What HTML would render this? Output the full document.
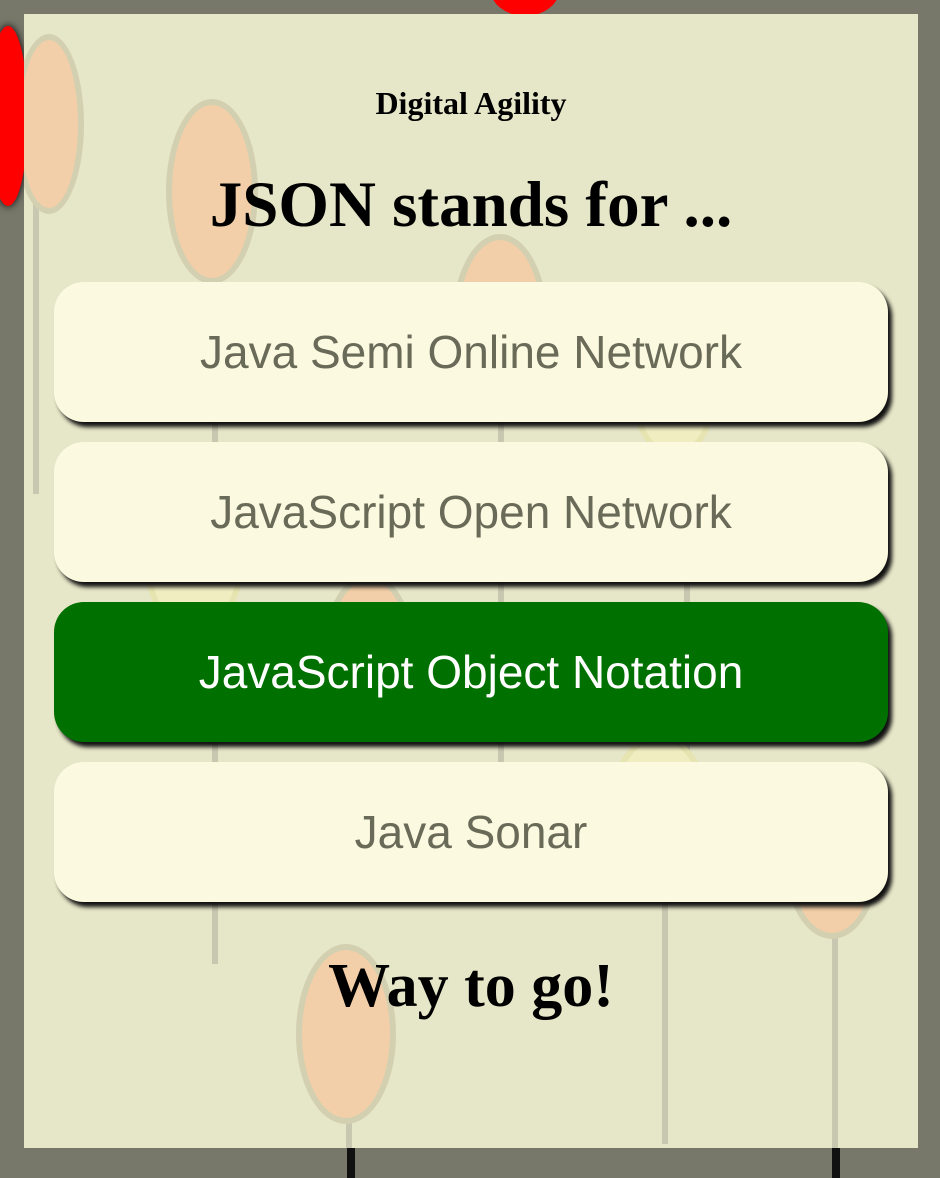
<!DOCTYPE html>
<html><head><style>
body{margin:0;width:940px;height:1172px;background:#77776a;position:relative;overflow:hidden;font-family:"Liberation Serif",serif}
.panel{position:absolute;left:24px;top:14px;width:894px;height:1134px;background:#e6e6c8;overflow:hidden}
.b{position:absolute;border-radius:50%;background:#f2cfa8;border:6px solid #d2d0b0;box-sizing:border-box}
.y{background:#f0eec0;border-color:#e6e4b0}
.s{position:absolute;width:6px;background:#c8c8b0}
.btn{position:absolute;left:30px;width:834px;height:140px;border-radius:30px;background:#fbf9e0;box-shadow:4px 5px 4px #111;text-align:center;line-height:140px;font-family:"Liberation Sans",sans-serif;font-size:46px;color:#6a6a58}
.g{background:#007000;color:#fff}
h{position:absolute;left:0;width:894px;text-align:center;font-weight:bold;color:#000;line-height:1.15}
</style></head><body>
<div style="position:absolute;left:-12px;top:26px;width:40px;height:180px;border-radius:50%;background:#f00;box-shadow:0 0 8px #000"></div>
<div style="position:absolute;left:490px;top:-40px;width:70px;height:56px;border-radius:50%;background:#f00"></div>
<div style="position:absolute;left:347px;top:1148px;width:8px;height:30px;background:#111"></div>
<div style="position:absolute;left:832px;top:1148px;width:8px;height:30px;background:#111"></div>
<div class="panel">
<div class="s" style="left:9px;top:190px;height:290px"></div>
<div class="b" style="left:-10px;top:20px;width:70px;height:180px"></div>
<div class="s" style="left:188px;top:270px;height:680px"></div>
<div class="b" style="left:142px;top:85px;width:92px;height:185px"></div>
<div class="s" style="left:474px;top:300px;height:500px"></div>
<div class="b" style="left:428px;top:220px;width:96px;height:180px"></div>
<div class="s" style="left:660px;top:440px;height:300px"></div>
<div class="b y" style="left:605px;top:285px;width:90px;height:160px"></div>
<div class="b y" style="left:120px;top:470px;width:100px;height:150px"></div>
<div class="b" style="left:300px;top:560px;width:90px;height:150px"></div>
<div class="s" style="left:638px;top:860px;height:270px"></div>
<div class="b y" style="left:585px;top:720px;width:100px;height:150px"></div>
<div class="s" style="left:808px;top:920px;height:220px"></div>
<div class="b" style="left:760px;top:760px;width:96px;height:165px"></div>
<div class="s" style="left:322px;top:1100px;height:40px"></div>
<div class="b" style="left:272px;top:930px;width:100px;height:180px"></div>
<h style="top:71px;font-size:32px">Digital Agility</h>
<h style="top:154px;font-size:65px">JSON stands for ...</h>
<div class="btn" style="top:268px">Java Semi Online Network</div>
<div class="btn" style="top:428px">JavaScript Open Network</div>
<div class="btn g" style="top:588px">JavaScript Object Notation</div>
<div class="btn" style="top:748px">Java Sonar</div>
<h style="top:937px;font-size:62px">Way to go!</h>
</div>
</body></html>
